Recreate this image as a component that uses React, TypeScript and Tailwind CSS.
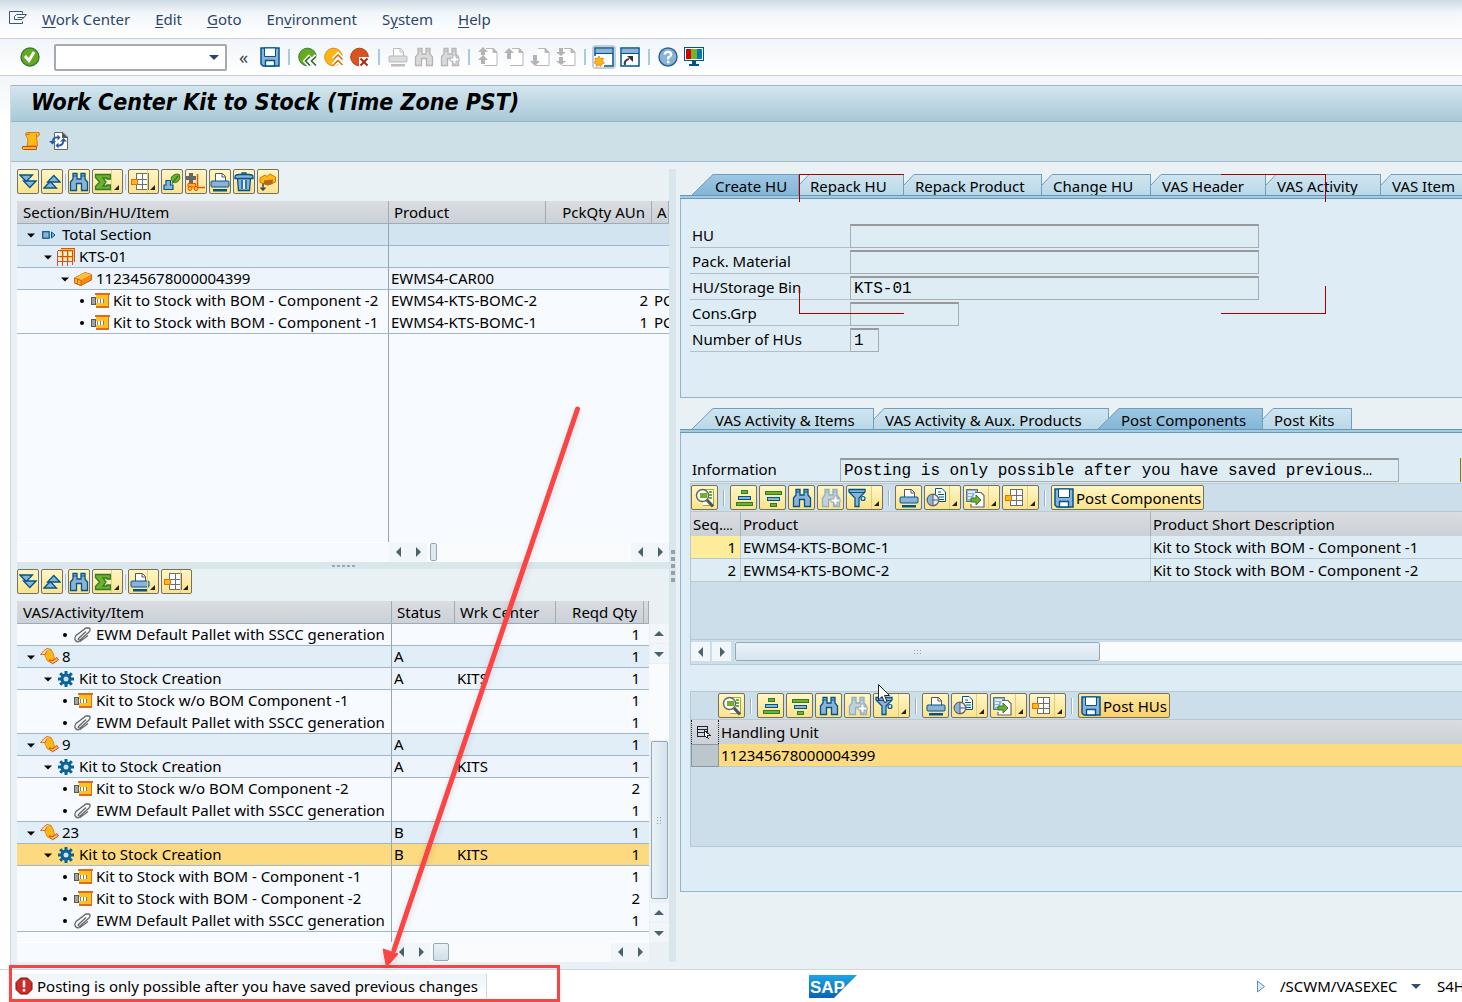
import React, { ReactNode } from "react";

const NAVY = "#00568a";
const SKY = "#8db2d8";

type IconProps = { children: ReactNode; w?: number; h?: number; smooth?: boolean };

function Icon({ children, w = 20, h = 20, smooth }: IconProps) {
  return (
    <svg
      width={w}
      height={h}
      viewBox={`0 0 ${w} ${h}`}
      fill="none"
      aria-hidden="true"
      className="block shrink-0"
      shapeRendering={smooth ? "auto" : "crispEdges"}
    >
      {children}
    </svg>
  );
}

/* ---------- glyphs ---------- */

const MenuGlyph = () => (
  <Icon smooth>
    <path d="M14.5 4.5V2.5H1.5V14.5H14.5V12.5" stroke="#3a5578" />
    <path d="M6.5 7.5L8.5 5.5H18.5M6.5 7.5V10.500H14L16 8.500M9.500 8.500H16M18.500 5.500L16 8.500" stroke="#3a5578" />
  </Icon>
);

const CheckGlyph = () => (
  <Icon smooth>
    <circle cx="10" cy="10" r="9" fill="#64aa20" stroke="#3c7a35" strokeWidth="1.4" />
    <path d="M5 9L9 13.500L14 5" stroke="#fff" strokeWidth="3" />
  </Icon>
);

const DiskGlyph = () => (
  <Icon smooth>
    <path d="M1 1H19V19H3L1 17Z" fill={SKY} stroke={NAVY} strokeWidth="1.500" />
    <path d="M4.500 1V9.500H15.500V1Z" fill="#fff" stroke={NAVY} />
    <path d="M5.500 19V13.500H14.500V19Z" fill="#fff" stroke={NAVY} strokeWidth="1.400" />
  </Icon>
);

const CircleCommand = ({ kind }: { kind: "back" | "exit" | "cancel" }) => (
  <Icon smooth>
    <circle
      cx="9.500"
      cy="10"
      r="8.800"
      fill={kind === "back" ? "#64aa20" : kind === "exit" ? "#fcb614" : "#d9541e"}
      stroke={kind === "back" ? "#3c7a35" : kind === "exit" ? "#e08a1c" : "#b0401c"}
    />
    {kind === "back" && (
      <>
        <path d="M12.500 9L8 14L12.500 19M18.500 9L14 14L18.500 19" stroke="#fff" strokeWidth="5" />
        <path d="M12 9.500L7.500 14L12 18.500M18 9.500L13.500 14L18 18.500" stroke="#2f6b38" strokeWidth="1.700" />
      </>
    )}
    {kind === "exit" && (
      <>
        <path d="M9.500 12.500L14 8L18.500 12.500M9.500 18L14 13.500L18.500 18" stroke="#fff" strokeWidth="5" />
        <path d="M9.500 12.500L14 8L18.500 12.500M9.500 18L14 13.500L18.500 18" stroke="#d8761a" strokeWidth="1.600" />
      </>
    )}
    {kind === "cancel" && (
      <>
        <rect x="9" y="10" width="10.500" height="9.500" fill="#fff" />
        <path d="M10.500 11.500L17.500 18.500M17.500 11.500L10.500 18.500" stroke="#a92c12" strokeWidth="2" />
      </>
    )}
  </Icon>
);

const Printer = ({ grey }: { grey?: boolean }) => (
  <Icon smooth>
    <path d="M5.500 9V1.500H12.500L15.500 4.500V9" fill="#fff" stroke={grey ? "#b9b9b9" : "#555"} />
    <path d="M12 1.500V5H15.500" stroke={grey ? "#b9b9b9" : "#555"} />
    <rect x="1" y="9" width="18" height="6" rx="1" fill={grey ? "#dcdcdc" : SKY} stroke={grey ? "#b9b9b9" : NAVY} />
    <rect x="3" y="17" width="14" height="2.500" fill={grey ? "#bdbdbd" : NAVY} />
  </Icon>
);

const Binoculars = ({ tone = "blue", more }: { tone?: "blue" | "grey" | "pale"; more?: boolean }) => {
  const fill = tone === "blue" ? SKY : tone === "grey" ? "#dadada" : "#c3d2d8";
  const line = tone === "blue" ? NAVY : tone === "grey" ? "#b6b6b6" : "#8fb0c6";
  return (
    <Icon smooth>
      <path
        d="M4 1.500H8V7H12V1.500H16V7L18.500 10V18.500H12.500V11.500H7.500V18.500H1.500V10L4 7Z"
        fill={fill}
        stroke={line}
        strokeWidth="1.300"
      />
      <path d="M4 4H8M12 4H16" stroke={line} />
      {more && (
        <path d="M13 8H16V11H19V14H16V17H13V14H10V11H13Z" fill="#fff" stroke={tone === "grey" ? "#b6b6b6" : "#9aa3c4"} />
      )}
    </Icon>
  );
};

const PageGlyph = ({ kind }: { kind: "first" | "prev" | "next" | "last" }) => (
  <Icon smooth>
    <path d="M8 1.500H15.500L19 5V18.500H6" fill="#fff" stroke="#b8b8b8" />
    <path d="M15 1V5.500H19" fill="#b8b8b8" stroke="#b8b8b8" />
    {kind === "first" && <path d="M5 0L10 5H7V8H3V5H0ZM5 8L10 13H7V17H3V13H0Z" fill="#b4b4b4" />}
    {kind === "prev" && <path d="M5 1L10 6H7V12H3V6H0Z" fill="#b4b4b4" />}
    {kind === "next" && <path d="M5 19L10 14H7V8H3V14H0Z" fill="#b4b4b4" />}
    {kind === "last" && <path d="M5 9L10 5H7V1H3V5H0ZM5 18L10 14H7V10H3V14H0Z" fill="#b4b4b4" />}
  </Icon>
);

const WindowGlyph = ({ kind }: { kind: "new" | "shortcut" }) => (
  <Icon smooth>
    <rect x="1" y="1" width="18" height="18" fill="#fff" stroke={NAVY} strokeWidth="1.500" />
    <rect x="2" y="2" width="16" height="4" fill={SKY} />
    <path d="M1 6.500H19" stroke={NAVY} />
    {kind === "new" ? (
      <>
        <rect x="0" y="9" width="10" height="11" fill="#fff" />
        <path
          d="M5 9L6.500 11.500L9.500 11L8.500 14L10.500 16L8 17L7 19.500L5 18L2.500 19.500L2 17L-0.500 15.500L1.500 14L1 11L3.500 11.500Z"
          fill="#fbb414"
          stroke="#e07c1a"
          strokeWidth="0.700"
        />
      </>
    ) : (
      <>
        <path d="M5 18Q4 13 9 12" stroke="#444" strokeWidth="2.200" />
        <path d="M7 9H13V15Z" fill="#333" />
      </>
    )}
  </Icon>
);

const HelpGlyph = () => (
  <Icon smooth>
    <circle cx="10" cy="10" r="9" fill={SKY} stroke="#2e6796" strokeWidth="1.500" />
    <path d="M6.800 7.500Q7 4.800 10 4.800T13.200 7.500Q13.200 9 10.200 10.500V12.500" stroke="#fff" strokeWidth="2.200" />
    <rect x="9" y="13.800" width="2.400" height="2.400" fill="#fff" />
  </Icon>
);

const MonitorGlyph = () => (
  <Icon>
    <rect x="0.500" y="0.500" width="19" height="13" fill="#fff" stroke={NAVY} />
    <rect x="2" y="2" width="5" height="10" fill="#d40000" />
    <rect x="7" y="2" width="6" height="10" fill="#79b41e" />
    <rect x="13" y="2" width="5" height="10" fill="#0078c0" />
    <path d="M8 14H12V17H15V19H5V17H8Z" fill={NAVY} />
  </Icon>
);

const ScrollGlyph = () => (
  <Icon smooth>
    <path d="M6 1.500H18Q19.500 4 17 5.500H15.500L16.500 15H6Q8 9 5.500 5.500Q3.500 2 6 1.500Z" fill="#fdbc12" stroke="#de7420" />
    <path d="M1.500 15.500H15.500V18.500H2.500Q0.500 18 1.500 15.500Z" fill="#fdbc12" stroke="#c4491a" />
    <path d="M5 3.500H8V1.500M15.500 5.500V3" stroke="#de7420" />
  </Icon>
);

const RefreshGlyph = () => (
  <Icon smooth>
    <path d="M5.500 1.500H14L18.500 6V18.500H5.500Z" fill="#fff" stroke="#666" />
    <path d="M13.500 1.500V6.500H18.500" fill="#555" stroke="#555" />
    <path d="M3.500 10Q4.500 6 9 6.500M14.500 10Q13.500 15 9 14.500" stroke="#2f57a0" strokeWidth="1.800" />
    <path d="M0 10H7L3.500 13.500ZM11 10.500L14.500 7L18 10.500ZM8.500 3.500V9.500L11.500 6.500ZM9.500 11.500V17.500L6.500 14.500Z" fill="#2f57a0" />
  </Icon>
);

const Expand = ({ up }: { up?: boolean }) => (
  <Icon w={18} h={18} smooth>
    <g transform={up ? "matrix(1 0 0 -1 0 17)" : undefined}>
      <path d="M1 2H13.500L7.200 8.500Z" fill={SKY} stroke={NAVY} strokeWidth="1.300" />
      <path d="M4.500 8H17L10.800 14.500Z" fill={SKY} stroke={NAVY} strokeWidth="1.300" />
    </g>
  </Icon>
);

const SumGlyph = () => (
  <Icon w={18} h={18} smooth>
    <path
      d="M1.500 1.500H16.500V6H13V5H9L12 9L9 13H13V12H16.500V16.500H1.500V13.500L5.500 9L1.500 4.500Z"
      fill="#72b126"
      stroke="#2f7a34"
      strokeWidth="1.300"
    />
  </Icon>
);

const LayoutGlyph = () => (
  <Icon>
    <path d="M6.500 1.500H18.500V17.500H6.500ZM6.500 7.500H18.500M6.500 12.500H18.500M12.500 1.500V17.500" fill="#fff" stroke="#6e6e6e" />
    <rect x="1.500" y="7.500" width="6" height="5" fill="#fdb813" stroke="#e0701c" />
  </Icon>
);

const MarkAllGlyph = () => (
  <Icon w={18} h={18} smooth>
    <path d="M10 9Q6.500 5 10 2.500Q13 0 16.500 1.500Q18 6 15 8.500Q12.500 10.500 10 9Z" fill="#72b126" stroke="#2f7a34" />
    <path d="M15 3L9 10.500" stroke="#2f7a34" strokeWidth="1.300" />
    <path d="M3 7.500H7.500V12H10V16.500H1V12H3Z" fill={SKY} stroke={NAVY} strokeWidth="1.200" />
  </Icon>
);

const ForkliftGlyph = () => (
  <Icon w={20} h={18} smooth>
    <path d="M3 0H7V3H10V7H7V10H3V7H0V3H3Z" fill="#666" />
    <path d="M2 14V10.500H9.500V14Z" fill="#fdb813" stroke="#d9541e" />
    <path d="M11.500 1V14.500H19" stroke="#d9541e" strokeWidth="1.500" />
    <circle cx="4" cy="15.500" r="2" fill="#fdb813" stroke="#d9541e" />
    <circle cx="10" cy="15.500" r="2" fill="#fdb813" stroke="#d9541e" />
  </Icon>
);

const TrashGlyph = () => (
  <Icon smooth>
    <path d="M3.500 6H16.500L15.500 18.500H4.500Z" fill={SKY} stroke={NAVY} strokeWidth="1.300" />
    <path d="M1 5Q1 2.500 5 2.500H15Q19 2.500 19 5V6.500H1Z" fill={SKY} stroke={NAVY} strokeWidth="1.300" />
    <path d="M8 2V1H12V2M8 8V17M12 8V17" stroke={NAVY} strokeWidth="1.300" />
    <path d="M10 8V17" stroke="#fff" strokeWidth="1.500" />
  </Icon>
);

const MoveBoxGlyph = () => (
  <Icon w={18} h={18} smooth>
    <path d="M1 5L6 2L8 3.500L11 1L16.500 4V9L9 12L1 9.500Z" fill="#fdb813" stroke="#d9701c" />
    <path d="M5 7.500L14 6.500L13.500 11L8.500 12.500L5 11Z" fill="#b4681c" />
    <path d="M4 10.500V17M1.500 14.500L4 17L6.500 14.500" stroke="#444" strokeWidth="1.500" />
  </Icon>
);

const DetailGlyph = () => (
  <Icon smooth>
    <path d="M8 1.500H18.500V17.500H8" fill="#fff" stroke="#8ab83a" />
    <path d="M14 4H17M14 7H17M14 10H17" stroke="#72b126" strokeWidth="2" />
    <circle cx="7.500" cy="7.500" r="6" fill="#fff" stroke="#666" strokeWidth="1.500" />
    <rect x="5" y="5" width="7" height="5" fill="#72b126" />
    <path d="M12 12L18 18.500" stroke="#555" strokeWidth="3.200" />
  </Icon>
);

const SortGlyph = ({ desc }: { desc?: boolean }) => (
  <Icon w={20} h={18}>
    <g transform={desc ? "matrix(1 0 0 -1 0 18)" : undefined}>
      <rect x="7" y="1" width="6" height="3" fill="#72b126" stroke="#2f7a34" />
      <rect x="4" y="7" width="12" height="3" fill={SKY} stroke={NAVY} />
      <rect x="2" y="13" width="16" height="3" fill="#72b126" stroke="#2f7a34" />
    </g>
  </Icon>
);

const FilterGlyph = () => (
  <Icon smooth>
    <path d="M1 1.500H17V4L11 10V18.500H7V10L1 4Z" fill={SKY} stroke={NAVY} strokeWidth="1.300" />
    <path d="M1 4.500H17" stroke={NAVY} />
    <circle cx="15" cy="10.500" r="2" fill="#dcebf5" stroke={NAVY} strokeWidth="1.200" />
  </Icon>
);

const ViewGlyph = () => (
  <Icon smooth>
    <path d="M9.500 0.500H16L19.500 4V13.500H9.500Z" fill="#fff" stroke={NAVY} />
    <path d="M12 4H15M12 6.500H18M13 9H18M13 11.500H18" stroke={NAVY} />
    <circle cx="7" cy="12" r="5.800" fill="#e8f0e8" stroke="#666" strokeWidth="1.400" />
    <path d="M7 7V17A5 5 0 0 1 7 7Z" fill={SKY} />
    <path d="M7 7V17M7 12H12" stroke="#557" />
  </Icon>
);

const ExportGlyph = () => (
  <Icon smooth>
    <rect x="1.500" y="1.500" width="11" height="12" fill={SKY} stroke="#4f7a9c" />
    <path d="M3 4H10M3 7H7M3 10H7" stroke="#fff" strokeWidth="1.300" />
    <path d="M10 4.500H16L19 7.500V19H6V16" fill="#fff" stroke="#666" strokeWidth="1.200" />
    <path d="M6 10H11V7L16 12L11 17V14H6Z" fill="#72b126" stroke="#2f7a34" />
  </Icon>
);

const SectionGlyph = () => (
  <Icon w={14} h={8} smooth>
    <rect x="0.700" y="0.700" width="6.500" height="6.500" fill={SKY} stroke={NAVY} strokeWidth="1.200" />
    <path d="M9.500 1V7L13 4Z" fill={SKY} stroke={NAVY} />
  </Icon>
);

const RackGlyph = () => (
  <Icon w={18} h={18}>
    <path d="M3 1H18V13H3Z" fill="#fdc33c" />
    <path d="M2 4H5V8H2ZM7 4H10V8H7ZM12 4H15V8H12ZM2 10H5V13H2ZM7 10H10V13H7ZM12 10H15V13H12Z" fill="#fff0d8" />
    <path d="M3.500 0.500H17.500V14M0.500 2.500H15.500V17M0.500 2.500V18M5.500 2.500V18M10.500 2.500V18M0 8.500H16M0 13.500H16" stroke="#d4521c" />
  </Icon>
);

const BoxGlyph = () => (
  <Icon w={18} h={14} smooth>
    <path d="M0.500 6L11 0.500L17.500 2.500V8L7 13.500L0.500 11Z" fill="#f28a10" stroke="#d0601a" />
    <path d="M0.500 6L7 8L17.500 2.500L11 0.500Z" fill="#fdc03c" />
    <path d="M0.500 6L7 8.500V13.500L0.500 11ZM3.500 7V12.500" fill="#fdb52a" stroke="#d0601a" />
  </Icon>
);

const KitGlyph = () => (
  <Icon w={19} h={17}>
    <rect x="5" y="2" width="13" height="13" fill="#fdc21c" />
    <path d="M4 1H19V3H4ZM5 14H18V16H5ZM17 3H18V14H17Z" fill="#e06a24" />
    <rect x="0.500" y="5.500" width="4" height="7" fill="#a4a4a4" stroke="#5a5a5a" />
    <rect x="5" y="7" width="8" height="4" fill="#fff" />
    <path d="M6.500 7V11M9.500 7V11M12.500 7V11" stroke="#777" />
  </Icon>
);

const ClipGlyph = () => (
  <Icon w={18} h={16} smooth>
    <path
      d="M12 4.500L4.500 11.500Q3.500 13.500 6 13L15 5Q17.500 1.500 14.500 1H12L2 8.500Q0 11.500 1.500 13.500Q3 15.500 6 14.500L14 8.500"
      stroke="#666"
      strokeWidth="1.300"
    />
  </Icon>
);

const OrderGlyph = () => (
  <Icon w={19} h={17} smooth>
    <path d="M7 2L11 1.500L13.500 6L14.500 11L11 14.500L7.500 13L5 8Z" fill="#fdb813" stroke="#e08a1c" />
    <path d="M7 2.500L5 6.500H0.500L3.500 3L7 0.500L11 1.500" fill="#fbe0a8" stroke="#de6a20" />
    <path d="M9 12L12.500 16L18.500 12L17 9.500L13 12.500Z" fill="#fdb95c" stroke="#d0521c" />
  </Icon>
);

const GearGlyph = () => (
  <Icon w={16} h={16} smooth>
    <circle cx="8" cy="8" r="5.500" fill="#0a6298" />
    <path d="M8 0V16M0 8H16M2.200 2.200L13.800 13.800M13.800 2.200L2.200 13.800" stroke="#0a6298" strokeWidth="3" />
    <circle cx="8" cy="8" r="2.500" fill="#cfe0ee" />
  </Icon>
);

/* ---------- controls ---------- */

const Triangle = ({ dir, className = "" }: { dir: "left" | "right" | "up" | "down"; className?: string }) => {
  const d = { left: "M7 0V10L2 5Z", right: "M3 0V10L8 5Z", up: "M0 7H10L5 2Z", down: "M0 3H10L5 8Z" }[dir];
  return (
    <svg width="10" height="10" viewBox="0 0 10 10" aria-hidden="true" className={`shrink-0 fill-current ${className}`}>
      <path d={d} />
    </svg>
  );
};

function YellowButton({ label, children, split, size = "sm" }: { label: string; children: ReactNode; split?: boolean; size?: "sm" | "lg" }) {
  const width = size === "sm" ? (split ? "w-[31px]" : "w-[22px]") : split ? "w-[37px]" : "w-[27px]";
  return (
    <button
      type="button"
      aria-label={label}
      title={label}
      className={`relative flex h-[25px] shrink-0 items-center overflow-hidden rounded-xs border border-[#77705a] bg-linear-to-b from-[#fff6c4] to-[#fbe38a] ${width} ${split ? "justify-start pl-px" : "justify-center"}`}
    >
      {children}
      {split && (
        <>
          <span className="absolute inset-y-0 right-2.5 w-px bg-[#e3cc84]" />
          <svg width="5" height="5" viewBox="0 0 5 5" className="absolute right-[3px] bottom-[3px]" aria-hidden="true">
            <path d="M5 0V5H0Z" fill="#222" />
          </svg>
        </>
      )}
    </button>
  );
}

function TextButton({ children, hot }: { children: ReactNode; hot?: boolean }) {
  return (
    <button
      type="button"
      className={`flex h-[25px] shrink-0 items-center gap-0.5 rounded-xs border border-[#77705a] bg-linear-to-b px-0.5 ${hot ? "from-[#fde9a0] to-[#fbd068]" : "from-[#fff6c4] to-[#fbe38a]"}`}
    >
      <DiskGlyph />
      {children}
    </button>
  );
}

const SmallRule = () => <span className="h-4 w-px shrink-0 bg-[#b5bcc0]" />;
const GridRule = () => (
  <span className="flex w-2 shrink-0 justify-center">
    <span className="h-4 w-0.5 border-l border-[#9fb0bd] bg-white" />
  </span>
);
const ToolRule = () => (
  <span className="flex w-1.5 shrink-0 justify-center">
    <span className="h-4 w-0.5 bg-[#a9cbe0]" />
  </span>
);

function ToolButton({ label, children, boxed }: { label: string; children: ReactNode; boxed?: boolean }) {
  return (
    <button type="button" aria-label={label} title={label} className={`size-5 shrink-0 ${boxed ? "rounded-xs bg-white ring-2 ring-[#c2ced9]" : ""}`}>
      {children}
    </button>
  );
}

function ScrollButton({ dir, label }: { dir: "left" | "right" | "up" | "down"; label: string }) {
  return (
    <button type="button" aria-label={label} className="flex h-[19px] w-[19px] shrink-0 items-center justify-center bg-[#f1f6fa] text-[#4a626c]">
      <Triangle dir={dir} />
    </button>
  );
}

/* ---------- tabs ---------- */

type TabSpec = { label: string; width: string; active?: boolean; wide?: boolean; overlap?: boolean };

function Tabs({ tabs, name }: { tabs: TabSpec[]; name: string }) {
  return (
    <div role="tablist" aria-label={name} className="flex h-[21px] overflow-hidden pl-3">
      {tabs.map((t) => {
        const top = t.active ? "#9dc7e3" : "#cfe5f0";
        const bottom = t.active ? "#84b6d8" : "#bad8e7";
        const id = `${name}-${t.label}`.replace(/[^A-Za-z]/g, "");
        const w = t.wide ? 22 : 11;
        const cut = t.wide ? 21 : 11;
        return (
          <button
            key={t.label}
            type="button"
            role="tab"
            aria-selected={!!t.active}
            className={`relative flex shrink-0 text-left whitespace-nowrap ${t.width} ${t.overlap ? "-ml-[11px]" : ""}`}
          >
            <svg width={w} height="21" viewBox={`0 0 ${w} 21`} className="shrink-0" aria-hidden="true">
              <defs>
                <linearGradient id={id} x1="0" y1="0" x2="0" y2="1">
                  <stop offset="0" stopColor={top} />
                  <stop offset="1" stopColor={bottom} />
                </linearGradient>
              </defs>
              <path d={`M0 21V${cut}L${w - 1} 0H${w}V21Z`} fill={`url(#${id})`} />
              <path d={`M0 ${cut}L${w - 1} 0.500H${w}`} stroke="#6f9fc0" fill="none" />
            </svg>
            <span
              className={`h-full flex-1 overflow-hidden border-t border-r border-[#6f9fc0] bg-linear-to-b leading-[22px] ${t.wide ? "pl-px" : ""} ${t.active ? "from-[#9dc7e3] to-[#84b6d8]" : "from-[#cfe5f0] to-[#bad8e7]"}`}
            >
              {t.label}
            </span>
          </button>
        );
      })}
    </div>
  );
}

const PanelStrip = () => <div className="h-1 border-y border-[#6698b8] bg-[#a1cae3]" />;

/* ---------- tree tables ---------- */

type Row = {
  depth: number;
  leaf?: boolean;
  icon: ReactNode;
  text: string;
  cells: string[];
  tone: "root" | "group" | "item" | "leaf" | "selected";
  line: boolean;
};

const toneClass = {
  root: "bg-[#d2e4f0]",
  group: "bg-[#e1edf7]",
  item: "bg-[#edf4fb]",
  leaf: "bg-[#f7faff]",
  selected: "bg-[#fdda80]",
};
const padClass = ["pl-[5px]", "pl-[22px]", "pl-[39px]", "pl-[56px]"];

function TreeTable({ heads, rows, cols, align }: { heads: string[]; rows: Row[]; cols: string[]; align: string[] }) {
  return (
    <table className="w-full table-fixed border-separate border-spacing-0">
      <colgroup>
        {cols.map((c, i) => (
          <col key={i} className={c} />
        ))}
      </colgroup>
      <thead>
        <tr className="h-[23px]">
          {heads.map((h, i) => (
            <th
              key={i}
              scope="col"
              className={`overflow-hidden border-r border-b border-[#a0abb5] bg-linear-to-b from-[#dadde1] to-[#cbd1d7] py-0 font-normal whitespace-nowrap ${align[i]} ${i === 0 ? "pl-1.5" : "pl-[5px]"} pr-1.5`}
            >
              {h}
            </th>
          ))}
        </tr>
      </thead>
      <tbody>
        {rows.map((r, n) => {
          const edge = r.line ? "border-b border-b-[#9fb7c8]" : "";
          return (
            <tr key={n} className={`h-[22px] align-top ${toneClass[r.tone]}`}>
              <td className={`overflow-hidden border-r border-r-[#95a6b3] p-0 ${edge}`}>
                <div className={`flex h-[21px] items-center whitespace-nowrap ${padClass[r.depth]}`}>
                  <span className="flex w-[17px] shrink-0 justify-center">
                    {r.leaf ? <span className="size-1 rounded-full bg-black" /> : <Triangle dir="down" className="scale-80" />}
                  </span>
                  <span className="flex w-5 shrink-0 justify-center">{r.icon}</span>
                  <span className="pl-[3px] leading-[21px]">{r.text}</span>
                </div>
              </td>
              {r.cells.map((c, i) => (
                <td key={i} className={`overflow-hidden py-0 pl-0.5 leading-[21px] whitespace-nowrap ${edge} ${align[i + 1]} ${align[i + 1] === "text-right" ? "pr-1" : "pr-0"}`}>
                  {c}
                </td>
              ))}
            </tr>
          );
        })}
      </tbody>
    </table>
  );
}

const stockRows: Row[] = [
  { depth: 0, icon: <SectionGlyph />, text: "Total Section", cells: ["", "", ""], tone: "root", line: true },
  { depth: 1, icon: <RackGlyph />, text: "KTS-01", cells: ["", "", ""], tone: "group", line: true },
  { depth: 2, icon: <BoxGlyph />, text: "112345678000004399", cells: ["EWMS4-CAR00", "", ""], tone: "item", line: true },
  { depth: 3, leaf: true, icon: <KitGlyph />, text: "Kit to Stock with BOM - Component -2", cells: ["EWMS4-KTS-BOMC-2", "2", "PC"], tone: "leaf", line: false },
  { depth: 3, leaf: true, icon: <KitGlyph />, text: "Kit to Stock with BOM - Component -1", cells: ["EWMS4-KTS-BOMC-1", "1", "PC"], tone: "leaf", line: true },
];

const pallet: Row = { depth: 2, leaf: true, icon: <ClipGlyph />, text: "EWM Default Pallet with SSCC generation", cells: ["", "", "1", ""], tone: "leaf", line: true };
const order = (no: string, status: string): Row => ({ depth: 0, icon: <OrderGlyph />, text: no, cells: [status, "", "1", ""], tone: "group", line: true });
const creation = (status: string, selected?: boolean): Row => ({
  depth: 1,
  icon: <GearGlyph />,
  text: "Kit to Stock Creation",
  cells: [status, "KITS", "1", ""],
  tone: selected ? "selected" : "item",
  line: true,
});
const kit = (text: string, qty: string): Row => ({ depth: 2, leaf: true, icon: <KitGlyph />, text, cells: ["", "", qty, ""], tone: "leaf", line: false });

const vasRows: Row[] = [
  pallet,
  order("8", "A"),
  creation("A"),
  kit("Kit to Stock w/o BOM Component -1", "1"),
  pallet,
  order("9", "A"),
  creation("A"),
  kit("Kit to Stock w/o BOM Component -2", "2"),
  pallet,
  order("23", "B"),
  creation("B", true),
  kit("Kit to Stock with BOM - Component -1", "1"),
  kit("Kit to Stock with BOM - Component -2", "2"),
  pallet,
];

/* ---------- form ---------- */

function Field({ id, label, value = "", width, labelWidth = "w-40" }: { id: string; label: string; value?: string; width: string; labelWidth?: string }) {
  return (
    <div className="flex h-6">
      <label htmlFor={id} className={`shrink-0 border-b border-[#b5bec4] pl-0.5 leading-[23px] ${labelWidth}`}>
        {label}
      </label>
      <input
        id={id}
        readOnly
        defaultValue={value}
        className={`h-6 shrink-0 border border-t-2 border-[#a9adb0] border-t-[#97999b] bg-[#deecf4] px-[3px] font-['Liberation_Mono',monospace] text-base outline-none ${width}`}
      />
    </div>
  );
}

function GridToolbar({ children }: { children: ReactNode }) {
  return (
    <div className="flex items-center gap-0.5 py-px">
      <YellowButton size="lg" label="Details"><DetailGlyph /></YellowButton>
      <GridRule />
      <YellowButton size="lg" label="Sort ascending"><SortGlyph /></YellowButton>
      <YellowButton size="lg" label="Sort descending"><SortGlyph desc /></YellowButton>
      <YellowButton size="lg" label="Find"><Binoculars /></YellowButton>
      <YellowButton size="lg" label="Find next"><Binoculars tone="pale" more /></YellowButton>
      <YellowButton size="lg" label="Filter" split><FilterGlyph /></YellowButton>
      <GridRule />
      <YellowButton size="lg" label="Print"><Printer /></YellowButton>
      <YellowButton size="lg" label="Views" split><ViewGlyph /></YellowButton>
      <YellowButton size="lg" label="Export" split><ExportGlyph /></YellowButton>
      <YellowButton size="lg" label="Layout" split><LayoutGlyph /></YellowButton>
      <GridRule />
      {children}
    </div>
  );
}

const gridHead = "bg-linear-to-b from-[#dadde1] to-[#cbd1d7] py-0 text-left font-normal";

/* ---------- page sections ---------- */

const menu: [string, string, string][] = [
  ["", "W", "ork Center"],
  ["", "E", "dit"],
  ["", "G", "oto"],
  ["En", "v", "ironment"],
  ["S", "y", "stem"],
  ["", "H", "elp"],
];

function MenuBar() {
  return (
    <nav className="flex h-[39px] items-center border-b border-[#c3ced8] bg-linear-to-b from-[#cfdbe5] via-[#f3f7fb] via-35% to-white pl-2 text-[#2b466e]">
      <button type="button" aria-label="Session menu" className="mr-3.5"><MenuGlyph /></button>
      <div className="flex gap-[25px]">
        {menu.map(([a, key, b]) => (
          <button key={b} type="button">
            {a}<span className="underline underline-offset-2">{key}</span>{b}
          </button>
        ))}
      </div>
    </nav>
  );
}

function StandardToolbar() {
  return (
    <div className="flex h-[37px] items-center gap-1.5 border-b border-[#cbd2da] bg-linear-to-b from-[#f1f5f9] to-white pl-5">
      <ToolButton label="Enter"><CheckGlyph /></ToolButton>
      <div className="relative ml-2 flex h-[27px] w-[173px] shrink-0 items-center rounded-xs border-2 border-[#a8a9ab] bg-white text-[#2b466e]">
        <input aria-label="Command" className="w-full flex-1 px-1 outline-none" />
        <button type="button" aria-label="Command history" className="pr-1.5 pl-2"><Triangle dir="down" /></button>
      </div>
      <button type="button" aria-label="Hide command field" className="mx-0.5 flex w-[17px] justify-center text-lg leading-5 text-[#444]">«</button>
      <ToolButton label="Save"><DiskGlyph /></ToolButton>
      <ToolRule />
      <ToolButton label="Back"><CircleCommand kind="back" /></ToolButton>
      <ToolButton label="Exit"><CircleCommand kind="exit" /></ToolButton>
      <ToolButton label="Cancel"><CircleCommand kind="cancel" /></ToolButton>
      <ToolRule />
      <ToolButton label="Print"><Printer grey /></ToolButton>
      <ToolButton label="Find"><Binoculars tone="grey" /></ToolButton>
      <ToolButton label="Find next"><Binoculars tone="grey" more /></ToolButton>
      <ToolRule />
      <ToolButton label="First page"><PageGlyph kind="first" /></ToolButton>
      <ToolButton label="Previous page"><PageGlyph kind="prev" /></ToolButton>
      <ToolButton label="Next page"><PageGlyph kind="next" /></ToolButton>
      <ToolButton label="Last page"><PageGlyph kind="last" /></ToolButton>
      <ToolRule />
      <ToolButton label="New session" boxed><WindowGlyph kind="new" /></ToolButton>
      <ToolButton label="Create shortcut"><WindowGlyph kind="shortcut" /></ToolButton>
      <ToolRule />
      <ToolButton label="Help"><HelpGlyph /></ToolButton>
      <ToolButton label="Customize layout"><MonitorGlyph /></ToolButton>
    </div>
  );
}

function StockPane() {
  return (
    <section className="flex flex-1 flex-col">
      <div className="flex items-center gap-0.5 pb-[7px]">
        <YellowButton label="Expand"><Expand /></YellowButton>
        <YellowButton label="Collapse"><Expand up /></YellowButton>
        <SmallRule />
        <YellowButton label="Find"><Binoculars /></YellowButton>
        <YellowButton label="Total" split><SumGlyph /></YellowButton>
        <SmallRule />
        <YellowButton label="Layout" split><LayoutGlyph /></YellowButton>
        <YellowButton label="Select"><MarkAllGlyph /></YellowButton>
        <YellowButton label="Create transport"><ForkliftGlyph /></YellowButton>
        <YellowButton label="Print"><Printer /></YellowButton>
        <YellowButton label="Delete"><TrashGlyph /></YellowButton>
        <YellowButton label="Move unit"><MoveBoxGlyph /></YellowButton>
      </div>
      <TreeTable
        heads={["Section/Bin/HU/Item", "Product", "PckQty AUn", "A"]}
        cols={["w-[372px]", "w-[157px]", "w-[106px]", "w-[17px]"]}
        align={["text-left", "text-left", "text-right", "text-left"]}
        rows={stockRows}
      />
      <div className="flex flex-1 bg-[#f7faff]">
        <div className="w-[372px] border-r border-[#95a6b3]" />
      </div>
      <div className="flex h-5 items-center bg-[#fafbfc]">
        <div className="h-full w-[372px] shrink-0 border-t border-white bg-[#f7faff]" />
        <ScrollButton dir="left" label="Scroll left" />
        <ScrollButton dir="right" label="Scroll right" />
        <div className="mx-[3px] h-[18px] w-[7px] shrink-0 rounded-xs border border-[#93a9b5] bg-[#dfeaf1]" />
        <div className="flex-1" />
        <ScrollButton dir="left" label="Scroll left by page" />
        <ScrollButton dir="right" label="Scroll right by page" />
      </div>
    </section>
  );
}

function VasPane() {
  return (
    <section>
      <div className="flex items-center gap-0.5 pb-[7px]">
        <YellowButton label="Expand"><Expand /></YellowButton>
        <YellowButton label="Collapse"><Expand up /></YellowButton>
        <SmallRule />
        <YellowButton label="Find"><Binoculars /></YellowButton>
        <YellowButton label="Total" split><SumGlyph /></YellowButton>
        <SmallRule />
        <YellowButton label="Print" split><Printer /></YellowButton>
        <YellowButton label="Layout" split><LayoutGlyph /></YellowButton>
      </div>
      <div className="flex">
        <div className="flex min-w-0 flex-1 flex-col">
          <TreeTable
            heads={["VAS/Activity/Item", "Status", "Wrk Center", "Reqd Qty", ""]}
            cols={["w-[375px]", "w-[63px]", "w-[101px]", "w-[88px]", "w-[5px]"]}
            align={["text-left", "text-left", "text-left", "text-right", "text-left"]}
            rows={vasRows}
          />
          <div className="flex h-2.5 bg-[#f7faff]">
            <div className="w-[375px] border-r border-[#95a6b3]" />
          </div>
        </div>
        <div className="flex w-5 shrink-0 flex-col items-center gap-px pt-[23px]">
          <ScrollButton dir="up" label="Scroll up" />
          <ScrollButton dir="down" label="Scroll down" />
          <div className="w-full flex-1 bg-[#fafbfc]" />
          <div className="flex h-[158px] w-[17px] items-center justify-center rounded-xs border border-[#93a9b5] bg-linear-to-r from-[#eaf2f8] to-[#d4e2eb]">
            <div className="grid grid-cols-2 gap-0.5">
              {[0, 1, 2, 3, 4, 5].map((i) => <span key={i} className="size-px bg-[#8ba2b0]" />)}
            </div>
          </div>
          <span className="h-0.5" />
          <ScrollButton dir="up" label="Scroll up by page" />
          <ScrollButton dir="down" label="Scroll down by page" />
        </div>
      </div>
      <div className="mr-5 flex h-5 items-center bg-[#fafbfc]">
        <div className="h-full w-[375px] shrink-0 border-t border-white bg-[#f7faff]" />
        <ScrollButton dir="left" label="Scroll left" />
        <ScrollButton dir="right" label="Scroll right" />
        <div className="mx-[3px] h-[18px] w-4 shrink-0 rounded-xs border border-[#93a9b5] bg-linear-to-b from-[#eaf2f8] to-[#cfdfe8]" />
        <div className="flex-1" />
        <ScrollButton dir="left" label="Scroll left by page" />
        <ScrollButton dir="right" label="Scroll right by page" />
      </div>
    </section>
  );
}

const repackTabs: TabSpec[] = [
  { label: "Create HU", width: "w-[107px]", active: true, wide: true },
  { label: "Repack HU", width: "w-[105px]" },
  { label: "Repack Product", width: "w-[138px]" },
  { label: "Change HU", width: "w-[109px]" },
  { label: "VAS Header", width: "w-[115px]" },
  { label: "VAS Activity", width: "w-[115px]" },
  { label: "VAS Item", width: "w-[115px]" },
];

const postTabs: TabSpec[] = [
  { label: "VAS Activity & Items", width: "w-[182px]", wide: true },
  { label: "VAS Activity & Aux. Products", width: "w-[235px]" },
  { label: "Post Components", width: "w-[165px]", active: true, wide: true, overlap: true },
  { label: "Post Kits", width: "w-[89px]" },
];

function CreatePanel() {
  return (
    <section className="relative">
      <Tabs name="Repack" tabs={repackTabs} />
      <PanelStrip />
      <div className="flex flex-col gap-0.5 border-b border-l border-[#8fb6cf] bg-[#deedf5] pt-[25px] pb-[45px] pl-[9px]">
        <Field id="hu" label="HU" width="w-[409px]" />
        <Field id="pack" label="Pack. Material" width="w-[409px]" />
        <Field id="bin" label="HU/Storage Bin" value="KTS-01" width="w-[409px]" />
        <Field id="cons" label="Cons.Grp" width="w-[109px]" />
        <Field id="count" label="Number of HUs" value="1" width="w-[29px]" />
      </div>
      <div className="pointer-events-none absolute top-0 left-[119px] h-[140px] w-[527px]">
        <span className="absolute top-0 left-0 h-7 w-[105px] border-t border-l border-[#a80000]" />
        <span className="absolute top-0 right-0 h-7 w-[105px] border-t border-r border-[#a80000]" />
        <span className="absolute bottom-0 left-0 h-7 w-[105px] border-b border-l border-[#a80000]" />
        <span className="absolute right-0 bottom-0 h-7 w-[105px] border-r border-b border-[#a80000]" />
      </div>
    </section>
  );
}

function PostPanel() {
  return (
    <section>
      <Tabs name="Post" tabs={postTabs} />
      <PanelStrip />
      <div className="border-b border-l border-[#8fb6cf] bg-[#deedf5] pt-[25px] pb-11 pl-[9px]">
        <div className="flex justify-between overflow-hidden">
          <Field id="info" label="Information" value="Posting is only possible after you have saved previous…" width="w-[559px]" labelWidth="w-[150px]" />
          <button type="button" aria-label="More information" className="h-6 w-0.5 shrink-0 border-l border-[#77705a] bg-[#fbe38a]" />
        </div>

        <div className="mt-px border-y border-l border-[#b8c9d4] bg-[#cbdee9]">
          <GridToolbar>
            <TextButton>Post Components</TextButton>
          </GridToolbar>
          <table className="w-full table-fixed border-separate border-spacing-0 border-t border-[#b8c9d4]">
            <colgroup>
              <col className="w-[50px]" />
              <col className="w-[410px]" />
              <col />
            </colgroup>
            <thead>
              <tr className="h-6">
                <th scope="col" className={`border-r border-[#a5b2bd] pl-0.5 whitespace-nowrap ${gridHead}`}>Seq.<span className="text-xs">...</span></th>
                <th scope="col" className={`border-r border-[#a5b2bd] pl-0.5 ${gridHead}`}>Product</th>
                <th scope="col" className={`pl-0.5 ${gridHead}`}>Product Short Description</th>
              </tr>
            </thead>
            <tbody>
              {[1, 2].map((n) => (
                <tr key={n} className="h-[23px] bg-[#deedf5]">
                  <td className={`border-r border-b border-[#b8c9d4] py-0 pr-1 text-right leading-[22px] ${n === 1 ? "bg-[#fdec9a]" : ""}`}>{n}</td>
                  <td className="border-r border-b border-[#b8c9d4] py-0 pl-0.5 leading-[22px]">EWMS4-KTS-BOMC-{n}</td>
                  <td className="border-b border-[#b8c9d4] py-0 pl-0.5 leading-[22px] whitespace-nowrap">Kit to Stock with BOM - Component -{n}</td>
                </tr>
              ))}
            </tbody>
          </table>
          <div className="h-[57px]" />
          <div className="mb-px flex h-6 items-center border-t border-[#b8c9d4]">
            <ScrollButton dir="left" label="Scroll left" />
            <span className="w-0.5" />
            <ScrollButton dir="right" label="Scroll right" />
            <div className="ml-1 flex h-[19px] flex-1 items-center bg-[#fafbfc]">
              <div className="flex h-[19px] w-[365px] items-center justify-center rounded-xs border border-[#93a9b5] bg-linear-to-b from-[#e9f2f9] to-[#d8e6f0]">
                <div className="grid grid-cols-3 gap-0.5">
                  {[0, 1, 2, 3, 4, 5].map((i) => <span key={i} className="size-px bg-[#8ba2b0]" />)}
                </div>
              </div>
            </div>
          </div>
        </div>

        <div className="mt-[26px] border-y border-l border-[#b8c9d4] bg-[#cbdee9] pb-[79px]">
          <div className="pl-[27px]">
            <GridToolbar>
              <TextButton hot>Post HUs</TextButton>
            </GridToolbar>
          </div>
          <table className="w-full table-fixed border-separate border-spacing-0 border-t border-[#b8c9d4]">
            <colgroup>
              <col className="w-7" />
              <col />
            </colgroup>
            <thead>
              <tr className="h-6">
                <th scope="col" className={`border-x border-dotted border-[#222] ${gridHead}`}>
                  <button type="button" aria-label="Select all" className="block pl-1">
                    <Icon w={16} h={16}>
                      <path d="M1.500 2.500H11.500V12.500H1.500ZM1.500 5.500H11.500M1.500 8.500H8" stroke="#223" />
                      <path d="M8 6L14 11H11L12 14L8 12Z" fill="#fff" stroke="#223" />
                    </Icon>
                  </button>
                </th>
                <th scope="col" className={`pl-0.5 ${gridHead}`}>Handling Unit</th>
              </tr>
            </thead>
            <tbody>
              <tr className="h-[23px]">
                <td className="border border-[#8b98a2] bg-[#bcc6cd] p-0" />
                <td className="border-b border-[#b8c9d4] bg-[#fddb80] py-0 pl-0.5 leading-[22px]">112345678000004399</td>
              </tr>
            </tbody>
          </table>
        </div>
      </div>
    </section>
  );
}

function StatusBar() {
  return (
    <footer className="flex h-[33px] items-center overflow-hidden border-t border-[#cfd6dc] bg-white">
      <div className="ml-[11px] flex h-6 w-[476px] shrink-0 items-center gap-1 border-r border-[#cdd9e2] bg-linear-to-b from-[#eef4f8] to-white pl-1">
        <Icon w={18} h={18} smooth>
          <path d="M5.500 1H12.500L17 5.500V12.500L12.500 17H5.500L1 12.500V5.500Z" fill="#cf2a28" stroke="#701a1a" />
          <path d="M9 3.500V10.500M9 12V14.500" stroke="#fff" strokeWidth="2.500" />
        </Icon>
        <span className="whitespace-nowrap" role="status">Posting is only possible after you have saved previous changes</span>
      </div>
      <div className="flex flex-1 justify-center pl-1.5">
        <svg width="48" height="23" viewBox="0 0 48 23" role="img" aria-label="SAP">
          <defs>
            <linearGradient id="sapBlue" x1="0" y1="0" x2="0" y2="1">
              <stop offset="0" stopColor="#1fa4e4" />
              <stop offset="1" stopColor="#0a63b4" />
            </linearGradient>
          </defs>
          <path d="M0 0H48L25 23H0Z" fill="url(#sapBlue)" />
          <text x="1" y="18" fontFamily="Liberation Sans, sans-serif" fontWeight="bold" fontSize="17" fill="#fff">SAP</text>
        </svg>
      </div>
      <div className="flex w-[290px] shrink-0 items-center justify-end gap-1.5 whitespace-nowrap">
        <button type="button" aria-label="Show status details" className="mr-2">
          <svg width="10" height="13" viewBox="0 0 10 13" aria-hidden="true"><path d="M1.500 1V12L8.500 6.500Z" fill="#dcebf5" stroke="#5d8fae" /></svg>
        </button>
        <span className="w-[125px]">/SCWM/VASEXEC</span>
        <Triangle dir="down" className="text-[#34506e]" />
        <span className="ml-2.5 w-[25px] overflow-hidden">S4H</span>
      </div>
    </footer>
  );
}

/* Callout drawn over the screen: arrow, frame around the message, and pointer. */
function Callout() {
  return (
    <div className="pointer-events-none absolute inset-0 overflow-hidden">
      <div className="absolute bottom-0 left-[9px] h-[37px] w-[551px] border-3 border-[#f54545] shadow-md" />
      <svg width="600" height="970" viewBox="0 0 600 970" className="absolute top-0 left-0 drop-shadow-md" aria-hidden="true">
        <path d="M577.500 409L394 950" stroke="#fb4444" strokeWidth="5" strokeLinecap="round" />
        <path d="M383 949L398 954L386.500 967Z" fill="#fb4444" stroke="#fb4444" />
      </svg>
      <svg width="13" height="20" viewBox="0 0 13 20" className="absolute top-[684px] left-[878px]" aria-hidden="true">
        <path d="M0.500 0.500V16L4 12.500L6.500 18.500L9 17.500L6.500 11.500H11.500Z" fill="#fff" stroke="#223" />
      </svg>
    </div>
  );
}

export default function App() {
  return (
    <div className="relative flex min-h-screen flex-col overflow-hidden bg-white font-['Noto_Sans',sans-serif] text-[15px] leading-5 text-black">
      <MenuBar />
      <StandardToolbar />
      <main className="flex flex-1 flex-col bg-linear-to-b from-[#f2f5f9] to-white to-5% pt-[9px] pl-2.5">
        <div className="flex flex-1 flex-col border-l border-[#cfd9e4] bg-[#e9f1f4]">
          <header className="flex h-[37px] items-center border-y border-[#98b5c3] bg-linear-to-b from-[#d4e6ee] to-[#a8c9d7] pl-5">
            <h1 className="pb-1 font-['DejaVu_Sans_Condensed','DejaVu_Sans',sans-serif] text-[23px] font-bold whitespace-nowrap text-black italic">
              Work Center Kit to Stock (Time Zone PST)
            </h1>
          </header>
          <div className="flex h-10 items-center gap-2 border-b border-[#a3bccb] bg-[#cde0e7] pb-0.5 pl-2.5">
            <ToolButton label="Log"><ScrollGlyph /></ToolButton>
            <ToolButton label="Refresh"><RefreshGlyph /></ToolButton>
          </div>
          <div className="flex flex-1 pt-[7px] pl-1.5">
            <div className="flex w-[652px] shrink-0 flex-col pb-[7px]">
              <StockPane />
              <div className="flex h-[7px] items-center justify-center bg-[#d9e6eb]">
                <div className="flex gap-0.5">
                  {[0, 1, 2, 3, 4].map((i) => <span key={i} className="h-0.5 w-[3px] bg-[#9aa8b2]" />)}
                </div>
              </div>
              <VasPane />
            </div>
            <div className="mb-[7px] flex w-[7px] shrink-0 flex-col items-center justify-center gap-[3px] bg-[#d9e6eb]">
              {[0, 1, 2, 3, 4].map((i) => <span key={i} className="size-1 bg-[#93a1ab]" />)}
            </div>
            <div className="ml-1 flex min-w-0 flex-1 flex-col gap-2.5 overflow-hidden pt-[5px]">
              <CreatePanel />
              <PostPanel />
            </div>
          </div>
        </div>
      </main>
      <StatusBar />
      <Callout />
    </div>
  );
}
